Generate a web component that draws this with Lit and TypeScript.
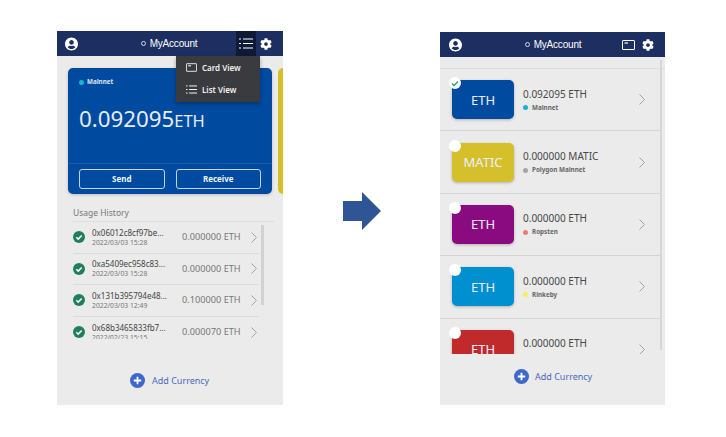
import { LitElement, html, css, svg } from "lit";
import { customElement } from "lit/decorators.js";

const userIcon = html`<svg class="ico-user" viewBox="0 0 496 512"><path fill="#fff" d="M248 8C111 8 0 119 0 256s111 248 248 248 248-111 248-248S385 8 248 8zm0 96c48.6 0 88 39.4 88 88s-39.4 88-88 88-88-39.4-88-88 39.4-88 88-88zm0 344c-58.7 0-111.3-26.6-146.5-68.2 18.8-35.4 55.6-59.8 98.5-59.8 2.4 0 4.8.4 7.1 1.1 13 4.2 26.6 6.9 40.9 6.9 14.3 0 28-2.7 40.9-6.9 2.3-.7 4.7-1.1 7.1-1.1 42.9 0 79.7 24.4 98.5 59.8C359.3 421.4 306.7 448 248 448z"/></svg>`;
const cogIcon = html`<svg class="ico-cog" viewBox="0 0 512 512"><path fill="#fff" d="M487.4 315.7l-42.6-24.6c4.3-23.2 4.3-47 0-70.2l42.6-24.6c4.9-2.8 7.1-8.6 5.5-14-11.1-35.6-30-67.8-54.7-94.6-3.8-4.1-10-5.1-14.8-2.3L380.8 110c-17.9-15.4-38.5-27.3-60.8-35.1V25.8c0-5.6-3.9-10.5-9.4-11.7-36.7-8.2-74.3-7.8-109.2 0-5.5 1.2-9.4 6.1-9.4 11.7V75c-22.2 7.9-42.8 19.8-60.8 35.1L88.7 85.5c-4.9-2.8-11-1.9-14.8 2.3-24.7 26.7-43.6 58.9-54.7 94.6-1.7 5.4.6 11.2 5.5 14L67.3 221c-4.3 23.2-4.3 47 0 70.2l-42.6 24.6c-4.9 2.8-7.1 8.6-5.5 14 11.1 35.6 30 67.8 54.7 94.6 3.8 4.1 10 5.1 14.8 2.3l42.6-24.6c17.9 15.4 38.5 27.3 60.8 35.1v49.2c0 5.6 3.9 10.5 9.4 11.7 36.7 8.2 74.3 7.8 109.2 0 5.5-1.2 9.4-6.1 9.4-11.7v-49.2c22.2-7.9 42.8-19.8 60.8-35.1l42.6 24.6c4.9 2.8 11 1.9 14.8-2.3 24.7-26.7 43.6-58.9 54.7-94.6 1.5-5.5-.7-11.3-5.6-14.1zM256 336c-44.1 0-80-35.9-80-80s35.9-80 80-80 80 35.9 80 80-35.9 80-80 80z"/></svg>`;
const listIcon = (w: number, h: number) => html`<svg width=${w} height=${h} viewBox="0 0 14 11" fill="none" stroke="#fff" stroke-width="1.200"><path d="M0 1h2M4 1h10M0 5.500h2M4 5.500h10M0 10h2M4 10h10"/></svg>`;
const cardIcon = (w: number, h: number) => html`<svg width=${w} height=${h} viewBox="0 0 13 10" fill="none" stroke="#fff" stroke-width="1"><rect x=".5" y=".5" width="12" height="9" rx=".5"/><path d="M2.500 3h3.500" stroke-width="1.200"/></svg>`;
const chevron = html`<svg class="chev" width="6" height="11" viewBox="0 0 6 11" fill="none" stroke="#a3a3a3" stroke-width="1"><path d="M.5.500l5 5-5 5"/></svg>`;
const check = html`<svg class="ok" width="12" height="12" viewBox="0 0 12 12"><circle cx="6" cy="6" r="6" fill="#1f7f5c"/><path d="M3.300 6.200l1.900 1.900 3.500-3.700" fill="none" stroke="#fff" stroke-width="1.500"/></svg>`;
const plus = html`<svg width="15" height="15" viewBox="0 0 15 15"><circle cx="7.500" cy="7.500" r="7.500" fill="#3f66c9"/><path d="M7.500 3.800v7.400M3.800 7.500h7.400" stroke="#fff" stroke-width="1.800"/></svg>`;

const history = [
  ["0x06012c8cf97be...", "2022/03/03 15:28", "0.000000 ETH"],
  ["0xa5409ec958c83...", "2022/03/03 15:28", "0.000000 ETH"],
  ["0x131b395794e48...", "2022/03/03 12:49", "0.100000 ETH"],
  ["0x68b3465833fb7...", "2022/02/23 15:15", "0.000070 ETH"],
];
const coins = [
  { sym: "ETH", amt: "0.092095 ETH", net: "Mainnet", col: "#004a9f", dot: "#16b5d0", on: true },
  { sym: "MATIC", amt: "0.000000 MATIC", net: "Polygon Mainnet", col: "#d5bf2b", dot: "#a5a5a5", on: false },
  { sym: "ETH", amt: "0.000000 ETH", net: "Ropsten", col: "#8a0b80", dot: "#f07a7a", on: false },
  { sym: "ETH", amt: "0.000000 ETH", net: "Rinkeby", col: "#0090cf", dot: "#f6f05a", on: false },
  { sym: "ETH", amt: "0.000000 ETH", net: "", col: "#c02a2a", dot: "transparent", on: false },
];

@customElement("app-root")
export class AppRoot extends LitElement {
  static styles = css`
    :host { display: block; width: 726px; height: 437px; background: #fff; font-family: "Noto Sans", "Open Sans", sans-serif; color: #444; overflow: hidden; }
    * { box-sizing: border-box; }
    .stage { display: flex; align-items: flex-start; padding: 31px 0 0 57px; }
    .phone { position: relative; width: 226px; height: 374px; background: #ebebeb; display: flex; flex-direction: column; flex: none; overflow: hidden; }
    .phone.right { width: 225px; height: 373px; margin-top: 1px; }
    .arrow { flex: none; width: 38px; height: 38px; margin: 161px 59px 0 60px; }
    header { height: 25px; flex: none; background: #1d2f60; display: flex; align-items: center; padding: 0 11px 0 8px; color: #fff; }
    .right header { padding: 0 11px 0 9px; }
    .ico-user { width: 13px; height: 14px; flex: none; }
    .ico-cog { width: 12px; height: 12px; flex: none; }
    .title { flex: 1; text-align: center; font: 10px/25px "Liberation Sans", Arial, sans-serif; letter-spacing: -.2px; padding-left: 24px; }
    .right .title { padding-left: 22px; }
    .title i { display: inline-block; width: 5px; height: 5px; border: 1px solid #cfd5e5; border-radius: 50%; margin-right: 4px; vertical-align: 1px; }
    .hbtn { width: 20px; height: 25px; background: #0f1a38; display: flex; align-items: center; justify-content: center; margin-right: 4px; flex: none; }
    .cardbtn { display: flex; margin-right: 7px; }
    .menu { position: absolute; left: 119px; top: 25px; width: 84px; height: 46px; background: #3a3b3e; box-shadow: 0 2px 4px rgba(0,0,0,.3); color: #f1f1f1; font-size: 8px; font-weight: 600; display: flex; flex-direction: column; padding-top: 1px; z-index: 2; }
    .menu div { height: 21.500px; display: flex; align-items: center; gap: 5px; padding: 0 0 0 10px; }
    .cards { display: flex; gap: 6px; padding: 12px 0 0 11px; flex: none; }
    .card { width: 204px; height: 126px; flex: none; background: #004a9f; border-radius: 5px; color: #fff; display: flex; flex-direction: column; box-shadow: 0 1px 3px rgba(0,0,0,.2); }
    .peek { width: 20px; height: 126px; flex: none; background: #d5bf2b; border-radius: 5px; }
    .net { display: flex; align-items: center; gap: 4px; font-size: 6.300px; font-weight: 700; color: #666; line-height: 10px; }
    .net i { width: 5px; height: 5px; border-radius: 50%; flex: none; }
    .card .net { color: #dfe8f4; padding: 9px 0 0 11px; gap: 3px; }
    .bal { padding: 15px 0 0 11px; font-size: 22.300px; line-height: 34px; height: 76px; color: #e4edf7; }
    .bal small { font-size: 16.500px; }
    .acts { height: 31px; border-top: 1px solid #1b5cab; display: flex; gap: 11px; padding: 5px 11px 0; }
    .acts span { flex: 1; height: 20px; border: 1px solid #c4d5ea; border-radius: 3px; text-align: center; font-size: 8px; font-weight: 700; line-height: 18px; color: #eef4fb; }
    .hist { padding: 13px 0 0 16px; font-size: 8.500px; line-height: 12px; color: #777; flex: none; }
    .hlist { position: relative; flex: none; margin: 2px 0 2px 16px; width: 201px; height: 118px; overflow: hidden; border-top: 1px solid #e0e0e0; }
    .hrow { height: 31.600px; width: 186px; display: flex; align-items: center; border-bottom: 1px solid #dcdcdc; }
    .ok { flex: none; }
    .hrow .txt { width: 97px; padding-left: 7px; flex: none; }
    .hrow b { display: block; font-weight: 400; font-size: 8px; line-height: 11px; color: #444; white-space: nowrap; }
    .hrow em { display: block; font-style: normal; font-size: 6.800px; line-height: 10px; color: #777; white-space: nowrap; }
    .hrow .amt { font-size: 9.200px; line-height: 12px; color: #777; flex: 1; white-space: nowrap; }
    .hrow .chev { flex: none; margin-right: 2px; }
    .hlist .bar { position: absolute; left: 188px; top: 3px; width: 3px; height: 80px; background: #d2d2d2; }
    .add { display: flex; align-items: center; gap: 7px; font-size: 9px; color: #4a68bf; flex: none; }
    .left .add { padding: 32px 0 0 73px; }
    .right .add { padding: 15px 0 0 74px; gap: 6px; }
    .clist { height: 286px; margin-top: 11px; border-top: 1px solid #dcdcdc; overflow: hidden; flex: none; }
    .crow { height: 62.400px; border-bottom: 1px solid #d4d4d4; display: flex; align-items: center; padding-left: 12px; width: 220px; }
    .coin { position: relative; width: 62px; height: 39px; border-radius: 5px; flex: none; color: #eef; font-size: 13px; display: flex; align-items: center; justify-content: center; box-shadow: 0 1px 3px rgba(0,0,0,.25); }
    .dot { position: absolute; left: -3px; top: -3px; width: 12px; height: 12px; border-radius: 50%; background: #fff; display: flex; align-items: center; justify-content: center; }
    .info { flex: 1; padding-left: 9px; }
    .info b { display: block; font-weight: 400; font-size: 10px; line-height: 14px; color: #484848; white-space: nowrap; }
    .info .net { margin-top: 2px; height: 10px; }
    .crow .chev { margin-right: 15px; flex: none; }
    .rbar { position: absolute; left: 220px; top: 28px; width: 2px; height: 290px; background: #d6d6d6; }
  `;

  private renderLeft() {
    return html`<section class="phone left">
      <header>${userIcon}<div class="title"><i></i>MyAccount</div><div class="hbtn">${listIcon(14, 11)}</div>${cogIcon}</header>
      <div class="menu"><div>${cardIcon(11, 9)}Card View</div><div>${listIcon(11, 9)}List View</div></div>
      <div class="cards">
        <div class="card">
          <div class="net"><i style="background:#16b5d0"></i>Mainnet</div>
          <div class="bal">0.092095<small>ETH</small></div>
          <div class="acts"><span>Send</span><span>Receive</span></div>
        </div>
        <div class="peek"></div>
      </div>
      <div class="hist">Usage History</div>
      <div class="hlist">
        ${history.map((r) => html`<div class="hrow">${check}<div class="txt"><b>${r[0]}</b><em>${r[1]}</em></div><div class="amt">${r[2]}</div>${chevron}</div>`)}
        <div class="bar"></div>
      </div>
      <div class="add">${plus}Add Currency</div>
    </section>`;
  }

  private renderRight() {
    return html`<section class="phone right">
      <header>${userIcon}<div class="title"><i></i>MyAccount</div><div class="cardbtn">${cardIcon(13, 10)}</div>${cogIcon}</header>
      <div class="clist">
        ${coins.map((c) => html`<div class="crow">
          <div class="coin" style="background:${c.col}">
            <div class="dot">${c.on ? svg`<svg width="8" height="7" viewBox="0 0 8 7"><path d="M1 3.500l2 2 4-4" fill="none" stroke="#1f9c78" stroke-width="1.300"/></svg>` : ""}</div>${c.sym}
          </div>
          <div class="info"><b>${c.amt}</b><div class="net"><i style="background:${c.dot}"></i>${c.net}</div></div>
          ${chevron}
        </div>`)}
      </div>
      <div class="rbar"></div>
      <div class="add">${plus}Add Currency</div>
    </section>`;
  }

  render() {
    return html`<div class="stage">
      ${this.renderLeft()}
      <svg class="arrow" viewBox="0 0 38 38"><path fill="#2f5597" d="M0 9h19V0l19 19-19 19V29H0z"/></svg>
      ${this.renderRight()}
    </div>`;
  }
}
